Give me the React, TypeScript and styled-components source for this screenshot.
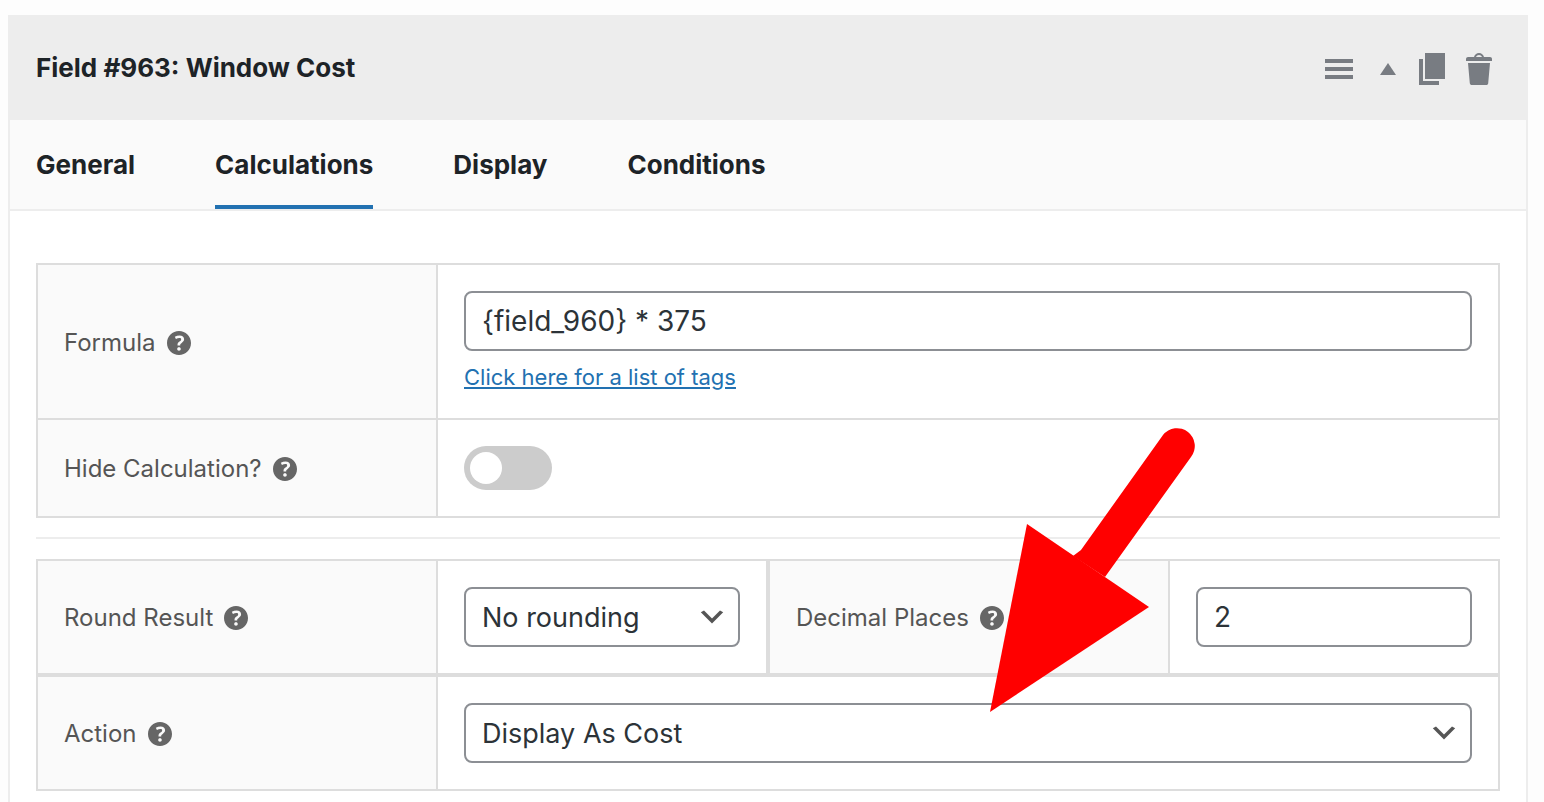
import React, { useState } from "react";
import styled, { createGlobalStyle } from "styled-components";

const GlobalStyle = createGlobalStyle`
  *, *::before, *::after { box-sizing: border-box; }
  body {
    margin: 0;
    background: #fdfdfd;
    color: #1d2327;
    font-family: Inter, "Liberation Sans", sans-serif;
  }
  button, input, select { font: inherit; color: inherit; }
`;

const Page = styled.main`
  display: flex;
  min-height: 100vh;
  padding: 15px 16px 0 8px;
`;

const Card = styled.section`
  flex: 1;
  min-width: 0;
  background: #fff;
  border: 2px solid #ededed;
  border-width: 0 2px;
`;

const Header = styled.header`
  display: flex;
  align-items: center;
  justify-content: space-between;
  min-height: 105px;
  padding: 0 26px;
  background: #ededed;
`;

const Title = styled.h2`
  margin: 0;
  font-size: 26px;
  font-weight: 700;
  line-height: 32px;
`;

const Actions = styled.div`
  display: flex;
  gap: 7px;
  padding-top: 3px;
`;

const IconButton = styled.button`
  display: block;
  width: 40px;
  height: 40px;
  padding: 0;
  border: 0;
  background: none;
  color: #787c82;
  cursor: pointer;

  svg { display: block; width: 100%; height: 100%; fill: currentColor; }
`;

const Tabs = styled.nav`
  display: flex;
  gap: 80px;
  padding: 0 26px;
  background: #fafafa;
  border-bottom: 2px solid #ededed;
`;

const Tab = styled.button<{ $active: boolean }>`
  height: 89px;
  padding: 4px 0 0;
  border: 0;
  border-bottom: 4px solid ${(p) => (p.$active ? "#2271b1" : "transparent")};
  background: none;
  font-size: 26px;
  font-weight: 700;
  line-height: 32px;
  cursor: pointer;
`;

const Body = styled.div`
  padding: 52px 26px 20px;
`;

const Group = styled.div`
  position: relative;
  border: 2px solid #ddd;
`;

const Divider = styled.hr`
  margin: 19px 0 20px;
  border: 0;
  border-top: 2px solid #ededed;
`;

const Row = styled.div<{ $rule?: number }>`
  display: flex;
  border-top: ${(p) => p.$rule ?? 0}px solid #ddd;
`;

const Field = styled.div`
  display: flex;
  flex: 1 1 0;
  min-width: 0;

  & + & { border-left: 4px solid #ddd; }
`;

const LabelCell = styled.div`
  display: flex;
  flex: none;
  align-items: center;
  gap: 11px;
  width: 400px;
  padding: 27px 26px 25px;
  background: #fafafa;
  border-right: 2px solid #ddd;
  color: #555;
  font-size: 24px;
  line-height: 32px;
`;

const HelpButton = styled(IconButton)`
  width: 24px;
  height: 24px;
  color: #666;
`;

const ControlCell = styled.div`
  flex: 1;
  min-width: 0;
  padding: 26px;
`;

const TextInput = styled.input`
  display: block;
  width: 100%;
  height: 60px;
  padding: 0 16px;
  border: 2px solid #8c8f94;
  border-radius: 8px;
  background: #fff;
  color: #2c3338;
  font-size: 28px;
`;

const SelectWrap = styled.div`
  position: relative;

  svg {
    position: absolute;
    top: 14px;
    right: 12px;
    width: 32px;
    height: 32px;
    fill: #555;
    pointer-events: none;
  }
`;

const SelectBox = styled.select`
  display: block;
  width: 100%;
  height: 60px;
  padding: 0 48px 0 16px;
  border: 2px solid #8c8f94;
  border-radius: 8px;
  background: #fff;
  color: #2c3338;
  font-size: 27px;
  appearance: none;
`;

const TagsLine = styled.p`
  margin: 11px 0 0;
  font-size: 22px;
  line-height: 30px;
`;

const TagsLink = styled.a`
  color: #2271b1;
`;

const Toggle = styled.input`
  display: block;
  width: 88px;
  height: 44px;
  margin: 0;
  padding: 6px;
  border-radius: 22px;
  background: #ccc;
  appearance: none;
  cursor: pointer;

  &::before {
    content: "";
    display: block;
    width: 32px;
    height: 32px;
    border-radius: 50%;
    background: #fff;
  }
  &:checked { background: #2271b1; }
  &:checked::before { margin-left: 44px; }
`;

const Pointer = styled.svg`
  position: absolute;
  top: -133px;
  left: calc(50% + 222px);
  width: 206px;
  height: 285px;
  fill: #f00;
  pointer-events: none;
`;

const icons = {
  menu: "M17 7V5H3v2h14zm0 4V9H3v2h14zm0 4v-2H3v2h14z",
  up: "M7 13l4-6 4 6H7z",
  copy: "M6 15V2h10v13H6zm-1 1h8v2H3V5h2v11z",
  trash:
    "M12 4h3c.6 0 1 .4 1 1v1H3V5c0-.6.5-1 1-1h3c.2-1.1 1.3-2 2.5-2s2.3.9 2.5 2zM8 4h3c-.2-.6-.9-1-1.5-1S8.2 3.4 8 4zM4 7h11l-.9 10.1c0 .5-.5.9-1 .9H5.9c-.5 0-.9-.4-1-.9L4 7z",
  chevron: "M5 6l5 5 5-5 2 1-7 7-7-7 2-1z",
  help: "M17 10c0-3.87-3.14-7-7-7-3.87 0-7 3.13-7 7s3.13 7 7 7c3.86 0 7-3.13 7-7zm-6.3 1.48H9.14v-.43c0-.38.08-.7.24-.98s.46-.57.88-.89c.41-.29.68-.53.81-.71.14-.18.2-.39.2-.62 0-.25-.09-.44-.28-.58-.19-.13-.45-.19-.79-.19-.58 0-1.25.19-2 .57l-.64-1.28c.87-.49 1.8-.74 2.77-.74.81 0 1.45.2 1.92.58.48.39.71.91.71 1.55 0 .43-.09.8-.29 1.11-.19.32-.57.67-1.11 1.06-.38.28-.61.49-.71.63-.1.15-.15.34-.15.57v.35zm-1.47 2.74c-.18-.17-.27-.42-.27-.73 0-.33.08-.58.26-.75s.43-.25.77-.25c.32 0 .57.09.75.26s.27.42.27.74c0 .3-.09.55-.27.72-.18.18-.43.27-.75.27-.33 0-.58-.09-.75-.27z",
};

function Icon({ name, viewBox = "0 0 20 20" }: { name: keyof typeof icons; viewBox?: string }) {
  return (
    <svg viewBox={viewBox} aria-hidden="true">
      <path d={icons[name]} />
    </svg>
  );
}

function FormField({ id, label, children }: { id: string; label: string; children: React.ReactNode }) {
  return (
    <Field>
      <LabelCell>
        <label htmlFor={id}>{label}</label>
        <HelpButton type="button" aria-label={`Help: ${label}`}>
          <Icon name="help" viewBox="3 3 14 14" />
        </HelpButton>
      </LabelCell>
      <ControlCell>{children}</ControlCell>
    </Field>
  );
}

function Select({ id, options }: { id: string; options: string[] }) {
  return (
    <SelectWrap>
      <SelectBox id={id}>
        {options.map((option) => (
          <option key={option}>{option}</option>
        ))}
      </SelectBox>
      <Icon name="chevron" />
    </SelectWrap>
  );
}

const tabs = ["General", "Calculations", "Display", "Conditions"];

export default function App() {
  const [active, setActive] = useState("Calculations");

  return (
    <>
      <GlobalStyle />
      <Page>
        <Card>
          <Header>
            <Title>Field #963: Window Cost</Title>
            <Actions>
              <IconButton type="button" aria-label="Reorder"><Icon name="menu" /></IconButton>
              <IconButton type="button" aria-label="Collapse"><Icon name="up" /></IconButton>
              <IconButton type="button" aria-label="Duplicate"><Icon name="copy" /></IconButton>
              <IconButton type="button" aria-label="Delete"><Icon name="trash" /></IconButton>
            </Actions>
          </Header>
          <Tabs>
            {tabs.map((tab) => (
              <Tab key={tab} type="button" $active={tab === active} onClick={() => setActive(tab)}>
                {tab}
              </Tab>
            ))}
          </Tabs>
          <Body>
            <Group>
              <Row>
                <FormField id="formula" label="Formula">
                  <TextInput id="formula" type="text" defaultValue="{field_960} * 375" />
                  <TagsLine>
                    <TagsLink href="#tags">Click here for a list of tags</TagsLink>
                  </TagsLine>
                </FormField>
              </Row>
              <Row $rule={2}>
                <FormField id="hide" label="Hide Calculation?">
                  <Toggle id="hide" type="checkbox" />
                </FormField>
              </Row>
            </Group>
            <Divider />
            <Group>
              <Row>
                <FormField id="round" label="Round Result">
                  <Select id="round" options={["No rounding"]} />
                </FormField>
                <FormField id="decimals" label="Decimal Places">
                  <TextInput id="decimals" type="text" inputMode="numeric" defaultValue="2" />
                </FormField>
              </Row>
              <Row $rule={4}>
                <FormField id="action" label="Action">
                  <Select id="action" options={["Display As Cost"]} />
                </FormField>
              </Row>
              <Pointer viewBox="0 0 206 285" aria-hidden="true">
                <path d="M83 128 L91 122 L173 7 A17 17 0 0 1 201 29 L115 149 Z" />
                <path d="M37 96 L159 179 L0 284 Z" />
              </Pointer>
            </Group>
          </Body>
        </Card>
      </Page>
    </>
  );
}
